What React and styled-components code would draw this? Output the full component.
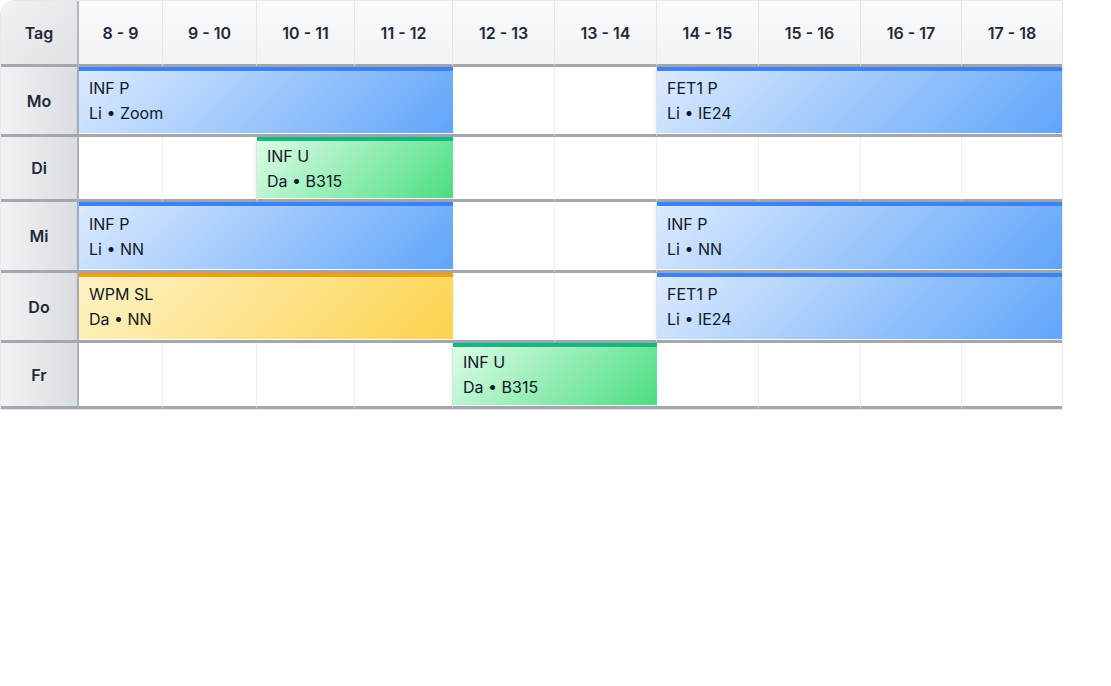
import React from "react";
import styled, { createGlobalStyle } from "styled-components";

const GlobalStyle = createGlobalStyle`
  html, body {
    margin: 0;
    padding: 0;
    background: #ffffff;
    font-family: Inter, "Noto Sans", "Liberation Sans", sans-serif;
    color: #111827;
  }
`;

const Table = styled.table`
  border-collapse: separate;
  border-spacing: 0;
  table-layout: fixed;
  width: 1062px;
  border: 1px solid #e6e8eb;
  border-top-left-radius: 14px;
  overflow: hidden;
  font-size: 16px;
`;

const HeadCell = styled.th`
  height: 63px;
  padding: 0;
  font-weight: 600;
  font-size: 16px;
  color: #1f2937;
  text-align: center;
  background: linear-gradient(180deg, #f9fafb 0%, #f2f3f5 100%);
  border-right: 1px solid #e5e7eb;
  border-bottom: 3px solid #a3a8b0;
  &:last-child {
    border-right: none;
  }
`;

const CornerCell = styled(HeadCell)`
  background: linear-gradient(135deg, #f1f2f4 0%, #dfe1e5 100%);
  border-right: 2px solid #b3b7bd;
`;

const DayCell = styled.td`
  height: ${(p) => p.$h}px;
  padding: 0;
  font-weight: 600;
  font-size: 16px;
  color: #1f2937;
  text-align: center;
  background: linear-gradient(90deg, #f1f2f4 0%, #dadde2 100%);
  border-right: 2px solid #aeb2b9;
  border-bottom: 3px solid #a3a8b0;
`;

const EmptyCell = styled.td`
  padding: 0;
  background: #ffffff;
  border-right: 1px solid #eceef1;
  border-bottom: 3px solid #a3a8b0;
  &:last-child {
    border-right: none;
  }
`;

const palette = {
  blue: {
    bar: "#3b82f6",
    bg: "linear-gradient(135deg, #dbeafe 0%, #60a5fa 100%)",
  },
  green: {
    bar: "#10b981",
    bg: "linear-gradient(135deg, #dcfce7 0%, #4ade80 100%)",
  },
  yellow: {
    bar: "#f59e0b",
    bg: "linear-gradient(135deg, #fef3c7 0%, #fcd34d 100%)",
  },
};

const EventCell = styled.td`
  padding: 0 10px 3px 10px;
  vertical-align: middle;
  background: ${(p) => palette[p.$kind].bg};
  border-top: 4px solid ${(p) => palette[p.$kind].bar};
  border-bottom: 3px solid #a3a8b0;
  box-shadow: inset 0 -1px 0 rgba(255, 255, 255, 0.9),
    0 2px 6px rgba(15, 23, 42, 0.12);
  color: #111827;
`;

const Line = styled.div`
  font-size: 16px;
  line-height: 25px;
  white-space: nowrap;
`;

const hours = [
  "8 - 9", "9 - 10", "10 - 11", "11 - 12", "12 - 13",
  "13 - 14", "14 - 15", "15 - 16", "16 - 17", "17 - 18",
];
const widths = [78, 84, 94, 98, 98, 102, 102, 102, 102, 101, 100];

const ev = (span, kind, title, sub) => ({ span, kind, title, sub });

const days = [
  {
    day: "Mo", h: 67,
    slots: [ev(4, "blue", "INF P", "Li • Zoom"), null, null, ev(4, "blue", "FET1 P", "Li • IE24")],
  },
  {
    day: "Di", h: 62,
    slots: [null, null, ev(2, "green", "INF U", "Da • B315"), null, null, null, null, null, null],
  },
  {
    day: "Mi", h: 68,
    slots: [ev(4, "blue", "INF P", "Li • NN"), null, null, ev(4, "blue", "INF P", "Li • NN")],
  },
  {
    day: "Do", h: 67,
    slots: [ev(4, "yellow", "WPM SL", "Da • NN"), null, null, ev(4, "blue", "FET1 P", "Li • IE24")],
  },
  {
    day: "Fr", h: 63,
    slots: [null, null, null, null, ev(2, "green", "INF U", "Da • B315"), null, null, null, null],
  },
];

export default function App() {
  return (
    <>
      <GlobalStyle />
      <Table>
        <colgroup>
          {widths.map((w, i) => (
            <col key={i} style={{ width: w }} />
          ))}
        </colgroup>
        <thead>
          <tr>
            <CornerCell>Tag</CornerCell>
            {hours.map((h) => (
              <HeadCell key={h}>{h}</HeadCell>
            ))}
          </tr>
        </thead>
        <tbody>
          {days.map((d) => (
            <tr key={d.day}>
              <DayCell $h={d.h}>{d.day}</DayCell>
              {d.slots.map((s, i) =>
                s ? (
                  <EventCell key={i} colSpan={s.span} $kind={s.kind}>
                    <Line>{s.title}</Line>
                    <Line>{s.sub}</Line>
                  </EventCell>
                ) : (
                  <EmptyCell key={i} />
                )
              )}
            </tr>
          ))}
        </tbody>
      </Table>
    </>
  );
}
